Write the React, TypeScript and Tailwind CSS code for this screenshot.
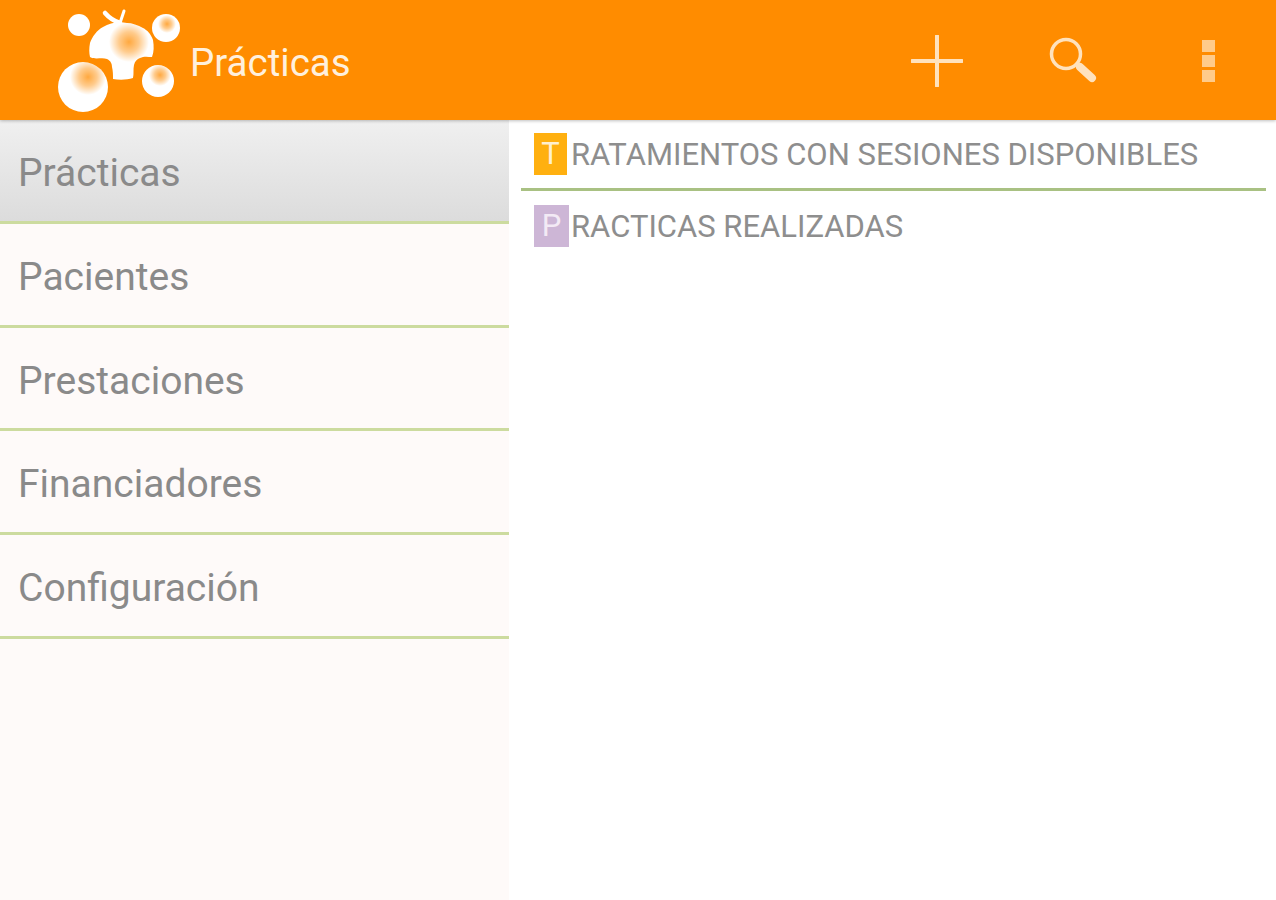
const menu = ['Prácticas', 'Pacientes', 'Prestaciones', 'Financiadores', 'Configuración'];

function Logo() {
  return (
    <svg width="130" height="120" viewBox="50 0 130 120" className="shrink-0">
      <defs>
        <radialGradient id="glow">
          <stop offset="0%" stopColor="#ff8c00" stopOpacity="0.75" />
          <stop offset="50%" stopColor="#ff8c00" stopOpacity="0.45" />
          <stop offset="100%" stopColor="#ff8c00" stopOpacity="0" />
        </radialGradient>
      </defs>
      <circle cx="79" cy="25" r="11" fill="white" />
      <path
        d="M127 23C118 21 110 23 103 27C97 30 92 37 90 43C89 48 89 53 90 57C95 60 102 57 107 59C111 61 112 64 112 67C113 71 113 75 113 79C119 80 127 80 133 78C134 74 133 69 134 65C135 61 137 59 140 58C144 56 148 57 152 57C154 52 154 46 153 40C151 34 147 30 143 28C138 25 132 23 127 23Z"
        fill="white"
      />
      <path d="M105 13Q111 20 120 23" fill="none" stroke="white" strokeWidth="4.5" strokeLinecap="round" />
      <path d="M124 11L120 23" fill="none" stroke="white" strokeWidth="3" strokeLinecap="round" />
      <circle cx="129" cy="42" r="20" fill="url(#glow)" />
      <circle cx="166" cy="28" r="14" fill="white" />
      <circle cx="167" cy="24" r="9" fill="url(#glow)" />
      <circle cx="158" cy="81" r="16" fill="white" />
      <circle cx="160" cy="75" r="11" fill="url(#glow)" />
      <circle cx="83" cy="87" r="25" fill="white" />
      <circle cx="88" cy="77" r="18" fill="url(#glow)" />
    </svg>
  );
}

function ActionIcons() {
  return (
    <div className="flex items-center">
      <svg width="52" height="52" viewBox="0 0 52 52" className="mr-[86px] mt-[2px]">
        <path d="M26 1v50M1 26h50" stroke="#ffe2bd" strokeWidth="4" strokeLinecap="round" />
      </svg>
      <svg width="48" height="48" viewBox="0 0 48 48" className="mr-[105px] mt-[2px]">
        <circle cx="17" cy="17" r="14.5" fill="none" stroke="#ffe2bd" strokeWidth="3.5" />
        <path d="M31 30l12 11" stroke="#ffe2bd" strokeWidth="8" strokeLinecap="round" />
      </svg>
      <div className="flex flex-col gap-[3px] mr-[61px] mt-[1px]">
        <div className="w-[13px] h-[12px] bg-[#ffcb8a]" />
        <div className="w-[13px] h-[12px] bg-[#ffcb8a]" />
        <div className="w-[13px] h-[12px] bg-[#ffcb8a]" />
      </div>
    </div>
  );
}

export default function App() {
  return (
    <div className="h-[900px] overflow-hidden flex flex-col bg-white font-['Roboto',sans-serif]">
      <header className="h-[120px] shrink-0 bg-[#ff8c00] flex items-center justify-between pl-[50px] shadow-[0_1px_3px_rgba(0,0,0,0.25)] z-10">
        <div className="flex items-center">
          <Logo />
          <span className="text-[38.5px] text-[#fff0dd] ml-[10px] mt-[6px]">Prácticas</span>
        </div>
        <ActionIcons />
      </header>
      <div className="flex flex-1">
        <nav className="w-[509px] shrink-0 bg-[#fefaf9]">
          {menu.map((item, i) => (
            <div
              key={item}
              className={`h-[103.75px] flex items-center pl-[18px] pt-[6px] border-b-[3px] border-[#ccdb9f] text-[39px] text-[#8a8a8a] ${
                i === 0 ? 'bg-gradient-to-b from-[#f0f0f0] to-[#dcdcdc]' : ''
              }`}
            >
              {item}
            </div>
          ))}
        </nav>
        <main className="flex-1 pl-[12px] pr-[10px] pt-[13px]">
          <div className="h-[58px] border-b-[3px] border-[#a9c183] flex items-start pl-[13px] text-[31px] text-[#8e8e8e]">
            <span className="w-[33px] h-[42px] bg-[#ffb010] text-[#fff0d0] flex items-center justify-center">T</span>
            <span className="ml-[4px] h-[42px] pt-[2px] flex items-center">RATAMIENTOS CON SESIONES DISPONIBLES</span>
          </div>
          <div className="pt-[14px] flex items-start pl-[13px] text-[31px] text-[#8e8e8e]">
            <span className="w-[35px] h-[42px] bg-[#cdb6d6] text-[#f3eaf5] flex items-center justify-center">P</span>
            <span className="ml-[2px] h-[42px] pt-[2px] flex items-center">RACTICAS REALIZADAS</span>
          </div>
        </main>
      </div>
    </div>
  );
}
